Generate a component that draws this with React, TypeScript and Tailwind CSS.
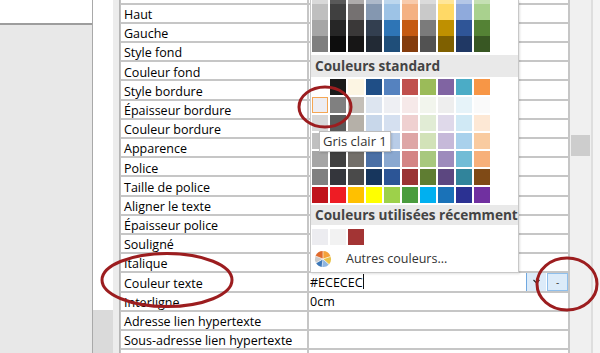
import React from "react";

const theme: string[][] = [
  ["#d9d9d9", "#595959", "#aeabab", "#adb9ca", "#bdd7ee", "#f8cbad", "#dbdbdb", "#ffe699", "#b4c7e7", "#c5e0b4"],
  ["#bfbfbf", "#404040", "#757171", "#8497b0", "#9dc3e6", "#f4b183", "#c9c9c9", "#ffd966", "#8faadc", "#a9d18e"],
  ["#a6a6a6", "#262626", "#3a3838", "#333f50", "#2e75b6", "#c55a11", "#7b7b7b", "#bf9000", "#2f5597", "#548235"],
  ["#7f7f7f", "#0d0d0d", "#171616", "#222a35", "#1f4e79", "#843c0c", "#525252", "#7f6000", "#203864", "#385723"],
];

const standard: string[][] = [
  ["#ffffff", "#1a1a1a", "#fcf5e3", "#1f4e86", "#5582bf", "#c0504d", "#9bbb59", "#8064a2", "#4bacc6", "#f79646"],
  ["#ededf2", "#808080", "#c4bfb8", "#dde5f0", "#eeeff3", "#f6e9e9", "#f2f5ed", "#eeeeee", "#e6f3f9", "#fafafa"],
  ["#d8d8d8", "#5a5a5a", "#b5b0a8", "#c8d7ea", "#d5e0f0", "#efd0d0", "#e1ecd5", "#dfd9ea", "#d0e9f5", "#fde8d5"],
  ["#c0c0c0", "#484848", "#a39e96", "#8ea9d4", "#b8cce7", "#dea6a6", "#d2e2b8", "#c6b9d9", "#a9d1ec", "#f9cba0"],
  ["#a6a6a6", "#404040", "#736f6a", "#4a6fa5", "#8aa8d0", "#d48585", "#a8c87e", "#9d8bbc", "#72bcd6", "#f7b07a"],
  ["#808080", "#34363c", "#4a4a4a", "#17365d", "#2c5596", "#9a3434", "#5f7d32", "#5c4780", "#31849b", "#7f4a16"],
  ["#c0141c", "#ee1c24", "#ffc000", "#ffff00", "#9dd14a", "#4a9c3e", "#00b0f0", "#1a72b8", "#2b3192", "#7030a0"],
];

const labels = [
  "Hauteur",
  "Haut",
  "Gauche",
  "Style fond",
  "Couleur fond",
  "Style bordure",
  "Épaisseur bordure",
  "Couleur bordure",
  "Apparence",
  "Police",
  "Taille de police",
  "Aligner le texte",
  "Épaisseur police",
  "Souligné",
  "Italique",
  "Couleur texte",
  "Interligne",
  "Adresse lien hypertexte",
  "Sous-adresse lien hypertexte",
  "",
];

function Swatch({ color, selected }: { color: string; selected?: boolean }) {
  return (
    <div
      className={
        selected
          ? "w-[16px] h-[16px] border border-[#f5a653]"
          : "w-[16px] h-[16px]"
      }
      style={{ backgroundColor: color }}
    />
  );
}

function Pie() {
  return (
    <svg width="18" height="18" viewBox="0 0 18 18" className="shrink-0">
      <path d="M9 9 L9 1 A8 8 0 0 1 16.5 6.5 Z" fill="#f4a23c" />
      <path d="M9 9 L16.5 6.5 A8 8 0 0 1 15 14.5 Z" fill="#e9c34a" />
      <path d="M9 9 L15 14.5 A8 8 0 0 1 8 17 Z" fill="#8fb6e0" />
      <path d="M9 9 L8 17 A8 8 0 0 1 2 13 Z" fill="#3d78b8" />
      <path d="M9 9 L2 13 A8 8 0 0 1 1.5 6 Z" fill="#c9c9c9" />
      <path d="M9 9 L1.5 6 A8 8 0 0 1 9 1 Z" fill="#e06a2c" />
      <path d="M9 1 L9 9 L16.5 6.5" fill="none" stroke="#ffffff" strokeWidth="0.6" />
      <path d="M9 9 L15 14.5 M9 9 L8 17 M9 9 L2 13 M9 9 L1.5 6" fill="none" stroke="#ffffff" strokeWidth="0.6" />
    </svg>
  );
}

export default function App() {
  return (
    <div className="relative w-[600px] h-[353px] overflow-hidden flex bg-[#f0f0f0] font-['Open_Sans',sans-serif] text-[12.5px] text-[#000]">
      {/* left panel */}
      <div className="w-[93px] shrink-0 flex flex-col border-r border-[#a9a9a9]">
        <div className="h-[25px] bg-white border-b-2 border-[#9d9d9d]" />
        <div className="flex-1 bg-[#e8e8e8]" />
      </div>
      <div className="w-[20px] shrink-0 flex flex-col">
        <div className="h-[310px] bg-white" />
        <div className="flex-1 bg-[#dadada]" />
      </div>
      <div className="w-[7px] shrink-0 bg-[#ececec] border-r border-[#b5b5b5]" />

      {/* property table */}
      <div className="w-[450px] shrink-0 flex flex-col mt-[-14.5px] bg-white border-l border-[#c3c3c3]">
        {labels.map((l, i) => (
          <div key={i} className="h-[19.2px] shrink-0 flex border-b-2 border-[#c6c6c6]">
            <div className="w-[188px] shrink-0 pl-[3px] pt-[4px] flex items-center leading-none whitespace-nowrap border-r-2 border-[#c6c6c6]">
              {l}
            </div>
            <div className="flex-1 min-w-0 flex items-center leading-none border-r-2 border-[#c6c6c6]">
              {l === "Couleur texte" ? (
                <>
                  <span className="pl-[1px] pt-[3px] shrink-0">#ECECEC</span>
                  <span className="w-px h-[15px] bg-[#111] shrink-0" />
                  <div className="flex-1 min-w-0" />
                  <div className="w-[20px] shrink-0 self-stretch bg-[#dcebf9] border-l border-[#6fa8e0] flex items-center justify-center">
                    <svg width="7" height="5" viewBox="0 0 7 5">
                      <path d="M0.5 1 L3.5 4 L6.5 1" fill="none" stroke="#222" strokeWidth="1.1" />
                    </svg>
                  </div>
                  <div className="w-[21px] shrink-0 self-stretch ml-[1px] bg-[#dcebf9] border border-[#8fbfec] flex items-center justify-center text-[10px] text-[#333]">
                    -
                  </div>
                </>
              ) : l === "Interligne" ? (
                <span className="pl-[1px] pt-[3px]">0cm</span>
              ) : null}
            </div>
          </div>
        ))}
      </div>

      {/* scrollbar */}
      <div className="w-[21px] shrink-0 bg-[#f0f0f0] flex flex-col">
        <div className="h-[135px]" />
        <div className="h-[21px] mx-[1px] bg-[#cdcdcd]" />
      </div>
      <div className="flex-1 border-l-2 border-[#dedede] bg-[#f4f4f4]" />

      {/* color picker popup */}
      <div className="absolute left-[310px] top-0 w-[209px] h-[273px] bg-white border-l border-r border-b border-[#c8c8c8] shadow-[1px_1px_2px_rgba(0,0,0,0.12)] flex flex-col overflow-hidden">
        <div className="mt-[-12px] pl-[1px] flex flex-col">
          {theme.map((row, r) => (
            <div key={r} className="flex gap-[2px]">
              {row.map((c, k) => (
                <Swatch key={k} color={c} />
              ))}
            </div>
          ))}
        </div>
        <div className="mt-[3px] h-[22px] bg-[#e9e9e9] pl-[4px] flex items-center font-bold text-[13.6px] text-[#444] whitespace-nowrap">
          Couleurs standard
        </div>
        <div className="mt-[2px] pl-[1px] flex flex-col gap-[2px]">
          {standard.map((row, r) => (
            <div key={r} className="flex gap-[2px]">
              {row.map((c, k) => (
                <Swatch key={k} color={c} selected={r === 1 && k === 0} />
              ))}
            </div>
          ))}
        </div>
        <div className="mt-[2px] h-[20px] bg-[#e9e9e9] pl-[4px] flex items-center font-bold text-[13.6px] text-[#444] whitespace-nowrap">
          Couleurs utilisées récemment
        </div>
        <div className="mt-[4px] pl-[1px] flex gap-[2px]">
          <Swatch color="#ececf0" />
          <Swatch color="#f2f2f2" />
          <Swatch color="#a33434" />
        </div>
        <div className="h-[26px] pl-[3px] pt-[2px] flex items-center">
          <div className="w-[32px] shrink-0 flex items-center">
            <Pie />
          </div>
          <span className="text-[12.5px] text-[#333] whitespace-nowrap">Autres couleurs...</span>
        </div>
      </div>

      {/* tooltip */}
      <div className="absolute left-[319px] top-[131px] h-[21px] px-[3px] bg-white border border-[#bcbcbc] shadow-[1px_1px_2px_rgba(0,0,0,0.15)] flex items-center text-[13px] text-[#333] whitespace-nowrap">
        Gris clair 1
      </div>

      {/* annotation ellipses */}
      <svg className="absolute left-0 top-0 pointer-events-none" width="600" height="353" viewBox="0 0 600 353">
        <ellipse cx="325" cy="107" rx="26" ry="20" fill="none" stroke="#9c1d1f" strokeWidth="3" />
        <ellipse cx="167" cy="280" rx="65" ry="26.5" fill="none" stroke="#9c1d1f" strokeWidth="3" />
        <ellipse cx="567" cy="284" rx="30" ry="26" fill="none" stroke="#9c1d1f" strokeWidth="3" />
      </svg>
    </div>
  );
}
